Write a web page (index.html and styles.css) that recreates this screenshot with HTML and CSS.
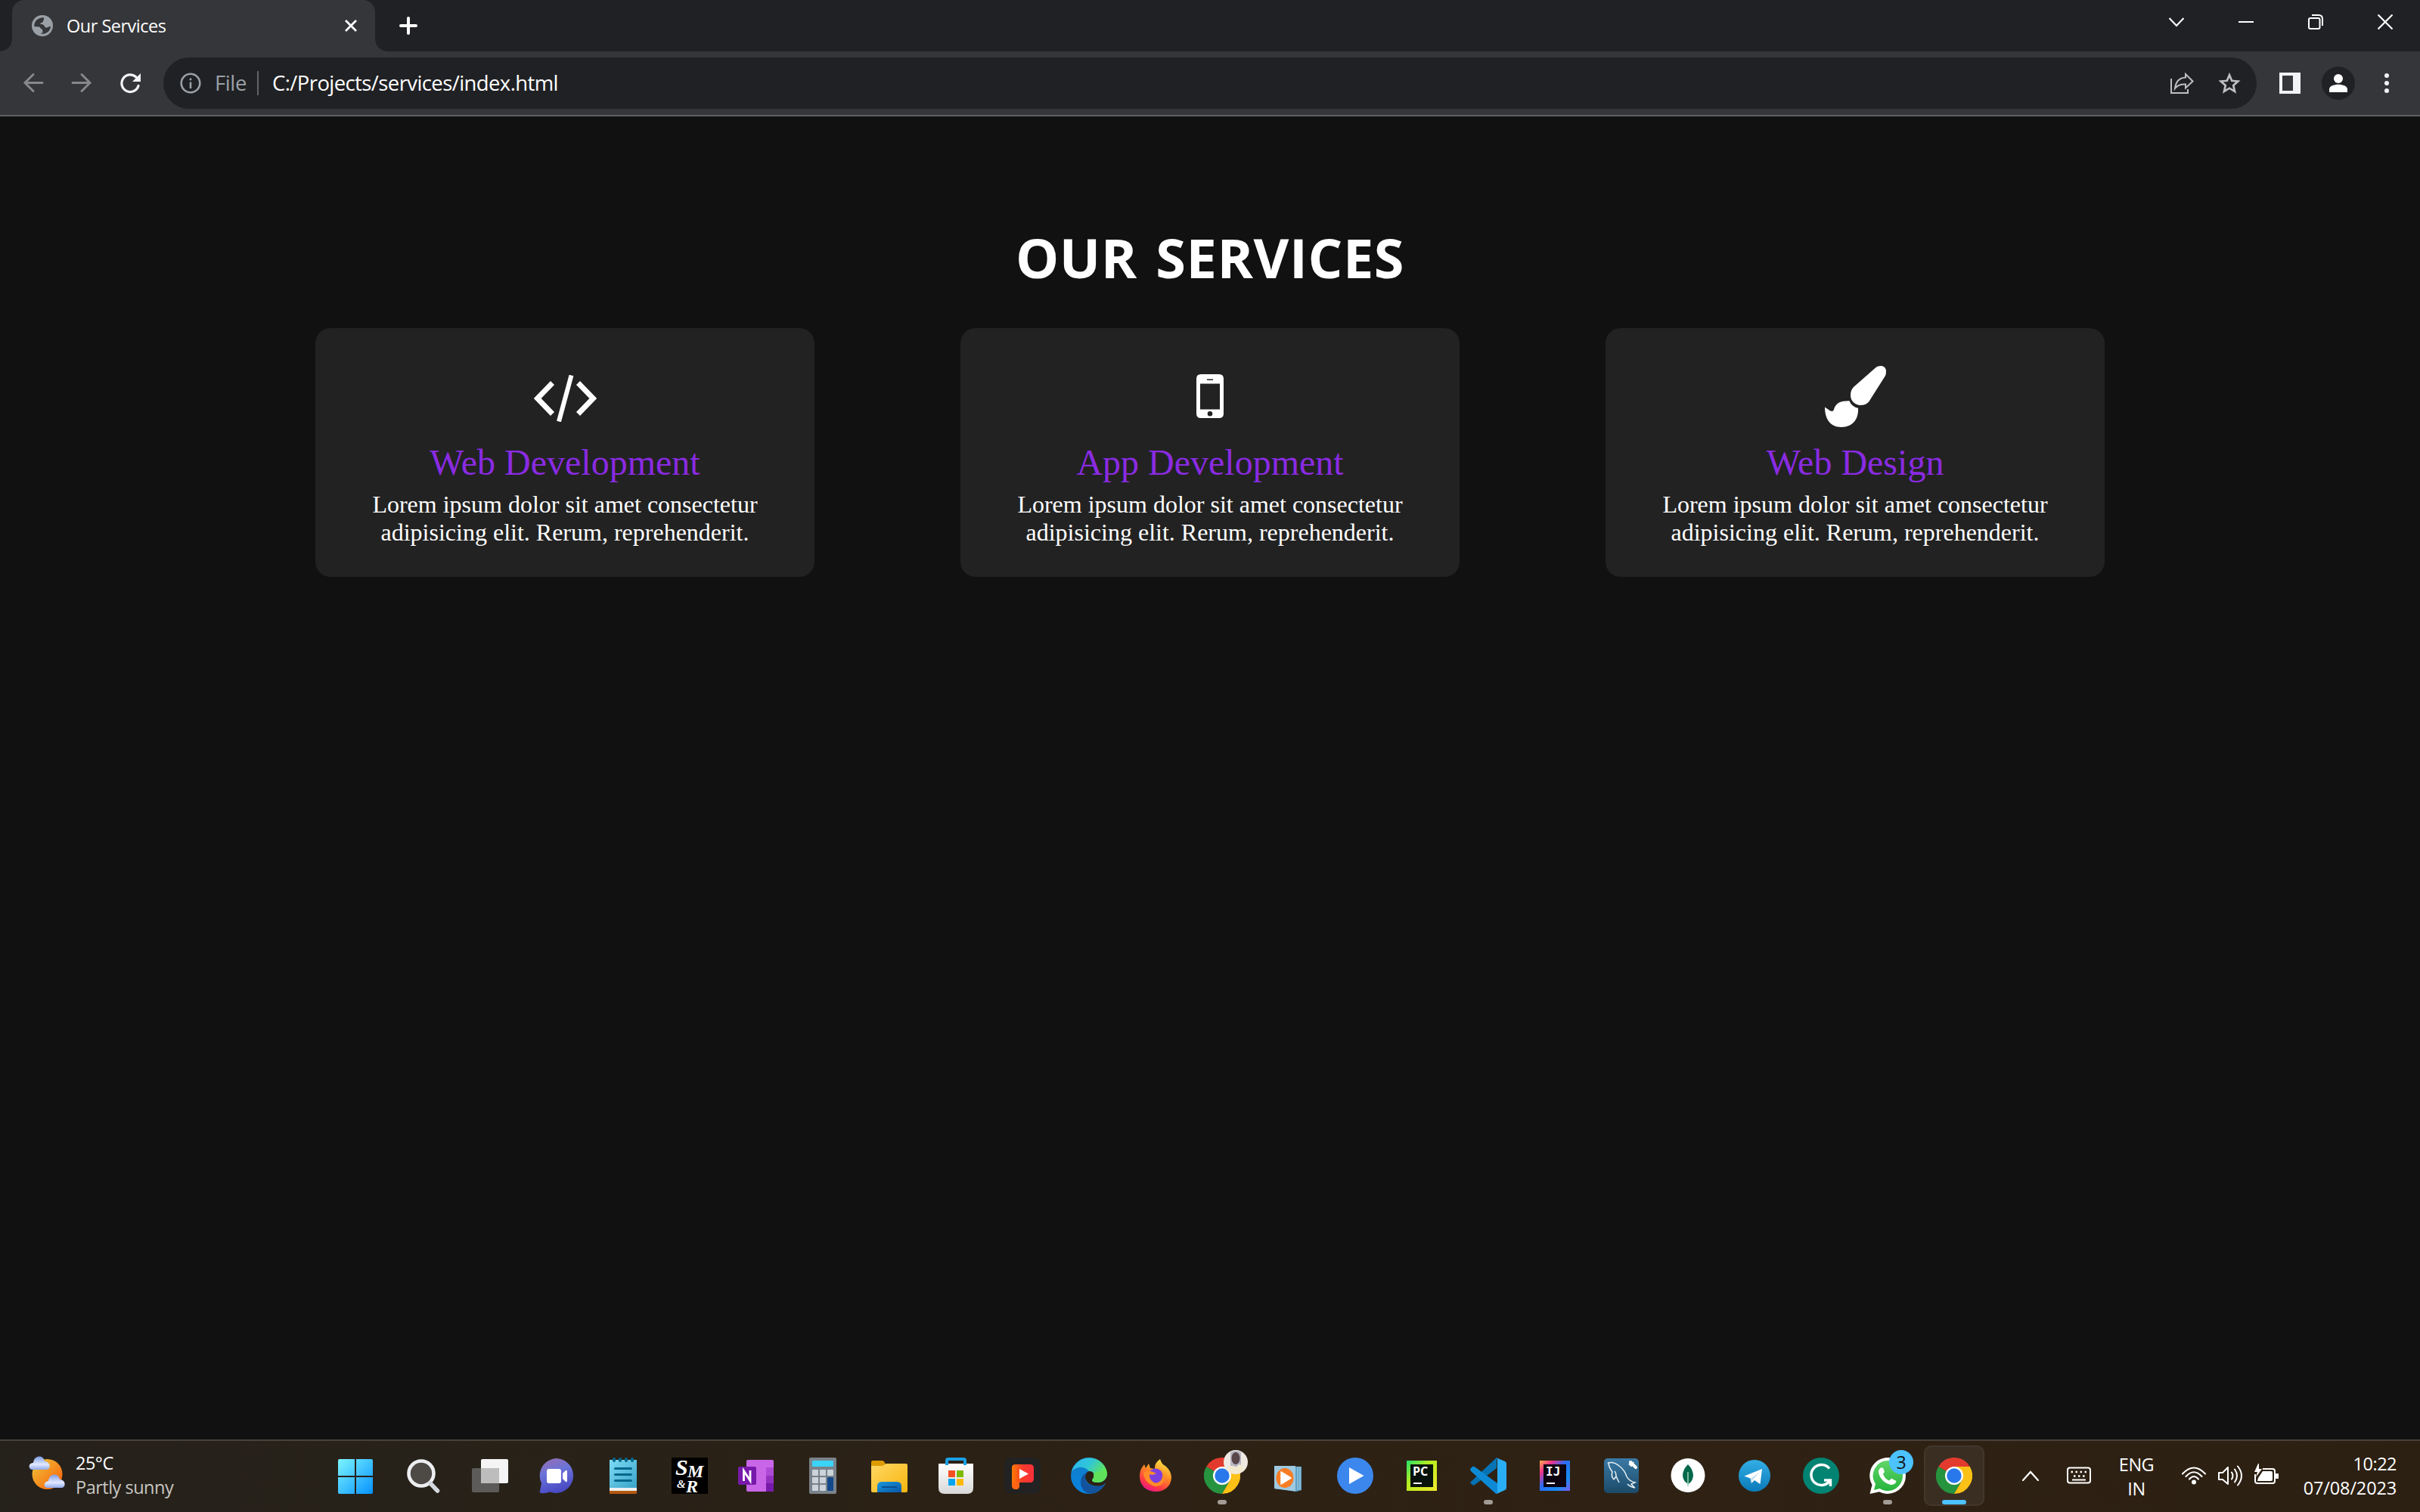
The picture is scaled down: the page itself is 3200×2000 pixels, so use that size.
FILE: index.html
```html
<!DOCTYPE html>
<html lang="en">
<head>
<meta charset="utf-8">
<title>Our Services</title>
<link rel="stylesheet" href="styles.css">
</head>
<body>
<header class="tabstrip">
  <div class="tab">
    <svg class="favicon" width="28" height="28" viewBox="0 0 28 28"><circle cx="14" cy="14" r="14" fill="#9aa0a6"/><path d="M16 3.200C8 3 3 8 3.200 15L9.500 15.500C12 16 11 18.500 14 18.500L14.500 23C13.500 23.500 12 24 11.500 24.600C19 26 25 21 25 14.500C23 16 21 15 20 16C18 17 17.500 14.500 15.500 13C14 11.500 12 12.500 11 11.500C12 10 14.500 10.500 15 8.500C15 6.500 17 6 16 3.200Z" fill="#35363a"/><path d="M16 3.200C17 7 15 7 15 9L11 11.500C14 12 15 11 16.500 14C18 17 19 17 21 16L25.500 13C25 7 21 3 16 3.200Z" fill="#9aa0a6"/></svg>
    <span class="tab-title">Our Services</span>
    <svg class="tab-close" width="16" height="16" viewBox="0 0 16 16" stroke="#fff" stroke-width="2.800"><path d="M1 1L15 15M15 1L1 15"/></svg>
  </div>
  <svg class="new-tab" width="24" height="24" viewBox="0 0 24 24" stroke="#fff" stroke-width="4" stroke-linecap="round"><path d="M12 2V22M2 12H22"/></svg>
  <div class="window-controls">
    <svg width="20" height="20" viewBox="0 0 20 20" fill="none" stroke="#fff" stroke-width="2.200"><path d="M.5 5L10 15L19.500 5"/></svg>
    <svg width="20" height="20" viewBox="0 0 20 20" stroke="#fff" stroke-width="2"><path d="M0 10H20"/></svg>
    <svg width="20" height="20" viewBox="0 0 20 20" fill="none" stroke="#fff" stroke-width="2"><rect x="1" y="5" width="14.500" height="14" rx="2"/><path d="M5 1H14Q19 1 19 6V15"/></svg>
    <svg width="20" height="20" viewBox="0 0 20 20" stroke="#fff" stroke-width="2.200"><path d="M.5 .5L19.500 19.500M19.500 .5L.5 19.500"/></svg>
  </div>
</header>

<nav class="toolbar">
  <div class="nav-buttons">
    <svg width="28" height="28" viewBox="0 0 28 28" fill="none" stroke="#86888a" stroke-width="3" stroke-linecap="round"><path d="M26 13.500H3M14 2.500L3 13.500L14 24.500"/></svg>
    <svg width="28" height="28" viewBox="0 0 28 28" fill="none" stroke="#86888a" stroke-width="3" stroke-linecap="round"><path d="M2 13.500H25M14 2.500L25 13.500L14 24.500"/></svg>
    <svg width="28" height="28" viewBox="0 0 28 28"><path d="M25 17.500A11.300 11.300 0 1 1 22 6" fill="none" stroke="#f1f3f4" stroke-width="3.200" stroke-linecap="round"/><path d="M28 1V12H17Z" fill="#f1f3f4"/></svg>
  </div>
  <div class="omnibox">
    <svg width="28" height="28" viewBox="0 0 28 28"><circle cx="14" cy="14" r="12.300" fill="none" stroke="#9aa0a6" stroke-width="2.600"/><path d="M12.700 12.500H15.300V21H12.700ZM12.700 7.500H15.300V10.200H12.700Z" fill="#9aa0a6"/></svg>
    <span class="scheme">File</span>
    <span class="divider"></span>
    <span class="url">C:/Projects/services/index.html</span>
    <div class="page-actions">
      <svg width="32" height="28" viewBox="0 0 32 28" fill="none" stroke="#bdbfc1" stroke-width="2"><path d="M2 8V27H24V22"/><path d="M7 21C8 12 13 7 21 6.500V2L30.500 11.500L21 20.500V15.500C14 15 10 17 7 21Z"/></svg>
      <svg width="30" height="28" viewBox="0 0 30 28" fill="none" stroke="#bdbfc1" stroke-width="2.700"><path d="M15 3.200L18.200 10.800L26.300 11.500L20.200 16.900L22 24.900L15 20.700L8 24.900L9.800 16.900L3.700 11.500L11.800 10.800Z"/></svg>
    </div>
  </div>
  <svg class="panel" width="28" height="28" viewBox="0 0 28 28"><path d="M0 0H28V28H0ZM4 4V24H18V4Z" fill="#f1f3f4" fill-rule="evenodd"/></svg>
  <div class="profile"><svg width="24" height="24" viewBox="0 0 24 24" fill="#fff"><circle cx="12" cy="6" r="6"/><path d="M0 24V20C0 11.500 24 11.500 24 20V24Z"/></svg></div>
  <svg class="kebab" width="6" height="28" viewBox="0 0 6 28" fill="#f1f3f4"><circle cx="3" cy="4" r="3"/><circle cx="3" cy="14" r="3"/><circle cx="3" cy="24" r="3"/></svg>
</nav>

<main class="page">
  <h1 class="title">OUR SERVICES</h1>
  <section class="cards">
    <article class="card">
      <div class="card-icon"><svg class="code" width="83" height="62" viewBox="0 0 83 62" fill="none" stroke="#fff" stroke-width="7"><path d="M24.500 10.500L4.700 31L24.500 51.500M58.500 10.500L78.300 31L58.500 51.500"/><path d="M49.500 .5L33 61.500" stroke-width="6"/></svg></div>
      <h2 class="card-title">Web Development</h2>
      <p class="card-text">Lorem ipsum dolor sit amet consectetur adipisicing elit. Rerum, reprehenderit.</p>
    </article>
    <article class="card">
      <div class="card-icon"><svg class="phone" width="36" height="58" viewBox="0 0 36 58"><path d="M6 0H30Q36 0 36 6V52Q36 58 30 58H6Q0 58 0 52V6Q0 0 6 0ZM5 12.500V46.500H31V12.500ZM14 6.500V8H22V6.500ZM18 49A3.300 3.300 0 0 0 18 55.600A3.300 3.300 0 0 0 18 49Z" fill="#fff" fill-rule="evenodd"/></svg></div>
      <h2 class="card-title">App Development</h2>
      <p class="card-text">Lorem ipsum dolor sit amet consectetur adipisicing elit. Rerum, reprehenderit.</p>
    </article>
    <article class="card">
      <div class="card-icon"><svg class="brush" width="81" height="81" viewBox="0 0 81 81" fill="#fff"><path d="M67 2.500L38 28Q34 32 34 39C34 47 41 52 47 52C54 52 58 49 61 43L80 13Q81 11 81 7C81 0 73-2 67 2.500Z"/><path d="M0 54.500C4 57 7 60 9.500 60Q11.500 60 12.500 56C15 49 21 46 32.500 46.200C34 50.500 38 54.500 44 55.800C45 70 37 81 22 81C7 81 0 70 0 54.500Z"/></svg></div>
      <h2 class="card-title">Web Design</h2>
      <p class="card-text">Lorem ipsum dolor sit amet consectetur adipisicing elit. Rerum, reprehenderit.</p>
    </article>
  </section>
</main>

<footer class="taskbar">
  <svg class="defs" width="0" height="0">
    <defs>
      <linearGradient id="sun" x1="0" y1="0" x2="1" y2="1"><stop offset="0" stop-color="#eec83a"/><stop offset="1" stop-color="#fb5a08"/></linearGradient>
      <linearGradient id="cloud" x1="0" y1="0" x2="0" y2="1"><stop offset="0" stop-color="#7d9ce6"/><stop offset=".6" stop-color="#e3eaff"/><stop offset="1" stop-color="#90aaec"/></linearGradient>
      <linearGradient id="win" x1="0" y1="0" x2="46" y2="46" gradientUnits="userSpaceOnUse"><stop offset="0" stop-color="#7df6ff"/><stop offset="1" stop-color="#0793ff"/></linearGradient>
      <linearGradient id="chat" x1="0" y1="0" x2=".3" y2="1"><stop offset="0" stop-color="#9a6cae"/><stop offset=".45" stop-color="#6c74d8"/><stop offset="1" stop-color="#4a4bc4"/></linearGradient>
      <linearGradient id="note" x1="0" y1="0" x2="1" y2="1"><stop offset="0" stop-color="#7fdcf5"/><stop offset="1" stop-color="#38a3c8"/></linearGradient>
      <linearGradient id="folder" x1="0" y1="0" x2="1" y2="1"><stop offset="0" stop-color="#ffd766"/><stop offset="1" stop-color="#f7b50c"/></linearGradient>
      <linearGradient id="blue" x1="0" y1="0" x2="1" y2="1"><stop offset="0" stop-color="#1a98dc"/><stop offset="1" stop-color="#0657a8"/></linearGradient>
      <linearGradient id="store" x1="0" y1="0" x2="0" y2="1"><stop offset="0" stop-color="#fff"/><stop offset="1" stop-color="#d8d8d8"/></linearGradient>
      <linearGradient id="play" x1="0" y1="0" x2="1" y2="0"><stop offset="0" stop-color="#ff7a00"/><stop offset=".5" stop-color="#fb3b2c"/><stop offset="1" stop-color="#f52f3a"/></linearGradient>
      <linearGradient id="edge" x1="0" y1="0" x2="1" y2=".5"><stop offset="0" stop-color="#2fb5f0"/><stop offset=".5" stop-color="#2fc6d8"/><stop offset="1" stop-color="#66e94c"/></linearGradient>
      <linearGradient id="edge2" x1="0" y1="0" x2="0" y2="1"><stop offset="0" stop-color="#0f7cc4"/><stop offset="1" stop-color="#0a84e2"/></linearGradient>
      <linearGradient id="fox" x1=".8" y1="0" x2=".3" y2="1"><stop offset="0" stop-color="#fff14a"/><stop offset=".45" stop-color="#ff8a26"/><stop offset=".8" stop-color="#ff3647"/><stop offset="1" stop-color="#e3158f"/></linearGradient>
      <linearGradient id="pc" x1="0" y1="0" x2="1" y2="1"><stop offset="0" stop-color="#21e06a"/><stop offset=".4" stop-color="#b5ee20"/><stop offset="1" stop-color="#f2e82c"/></linearGradient>
      <linearGradient id="ij" x1="0" y1="0" x2="1" y2="1"><stop offset="0" stop-color="#fdb24a"/><stop offset=".22" stop-color="#f0308c"/><stop offset=".45" stop-color="#2a6cf4"/><stop offset=".75" stop-color="#168cf0"/><stop offset="1" stop-color="#7b5cf0"/></linearGradient>
      <linearGradient id="sql" x1="0" y1="0" x2="0" y2="1"><stop offset="0" stop-color="#3a7aa6"/><stop offset="1" stop-color="#1c4a68"/></linearGradient>
      <linearGradient id="tg" x1="0" y1="0" x2="0" y2="1"><stop offset="0" stop-color="#33aee6"/><stop offset="1" stop-color="#0a7ab8"/></linearGradient>
      <linearGradient id="wa" x1="0" y1="0" x2="0" y2="1"><stop offset="0" stop-color="#60d66a"/><stop offset="1" stop-color="#28b43c"/></linearGradient>
      <symbol id="chrome" viewBox="0 0 48 48"><path d="M24 24L3.200 12A24 24 0 0 1 44.800 12Z" fill="#e23b2e"/><path d="M24 24L3.200 12A24 24 0 0 0 24 48L34.500 30Z" fill="#26943f"/><path d="M24 12H44.800A24 24 0 0 1 24 48L34.500 30Z" fill="#fbc116"/><circle cx="24" cy="24" r="12" fill="#fff"/><circle cx="24" cy="24" r="9.700" fill="#2878eb"/></symbol>
    </defs>
  </svg>

  <div class="weather">
    <svg width="50" height="46" viewBox="0 0 50 46"><circle cx="24.500" cy="25" r="20" fill="url(#sun)"/><path d="M5 19C-1 19-1 10 6 10C7-1 20-1 21 8C29 8 30 19 23 19Z" fill="url(#cloud)"/><path d="M25 43C19 43 19 35 26 34C27 23 40 23 41 32C49 32 50 43 43 43Z" fill="url(#cloud)"/></svg>
    <div class="weather-text"><span class="temp">25°C</span><span class="sky">Partly sunny</span></div>
  </div>

  <div class="apps">
    <div class="app"><svg viewBox="0 0 48 48"><path fill="url(#win)" d="M1 2H21V24H-1V4Q-1 2 1 2ZM23 2H43Q45 2 45 4V24H23ZM-1 26H21V48H1Q-1 48-1 46ZM23 26H45V46Q45 48 43 48H23Z"/></svg></div>
    <div class="app"><svg viewBox="0 0 48 48"><circle cx="21" cy="21" r="16.500" fill="#4d4a45" stroke="#eceef0" stroke-width="4.600"/><path d="M33 34L42.500 44" stroke="#d4d8de" stroke-width="5.500" stroke-linecap="round"/></svg></div>
    <div class="app"><svg viewBox="0 0 48 48"><rect x="12" y="2" width="36" height="32" rx="2" fill="#f4f4f4"/><rect x="0" y="14" width="36" height="32" rx="2" fill="#5c5b59"/><path d="M12 14H34Q36 14 36 16V34H12Z" fill="#bdbdbd"/></svg></div>
    <div class="app"><svg viewBox="0 0 48 48"><path d="M24 1A23 23 0 1 1 15 45.500Q9 48 3 47Q1 46.500 2 44L4 34A23 23 0 0 1 24 1Z" fill="url(#chat)"/><rect x="11" y="15" width="19" height="19" rx="3" fill="#fff"/><path d="M32 21L36 17Q38 16 38 19V30Q38 33 36 32L32 28Z" fill="#fff"/></svg></div>
    <div class="app"><svg viewBox="0 0 48 48"><rect x="6" y="42" width="36" height="6" rx="1" fill="#b4590f"/><rect x="6" y="38" width="36" height="6" fill="#eee"/><path d="M6 3H42V40H6Z" fill="url(#note)"/><path d="M12 2V4M20 2V4M28 2V4M36 2V4" stroke="#04678c" stroke-width="4" stroke-linecap="round"/><path d="M13.500 14.500H34.500M13.500 22.500H34.500M13.500 30.500H34.500" stroke="#04678c" stroke-width="3" stroke-linecap="round"/></svg></div>
    <div class="app"><svg viewBox="0 0 48 48" class="smr"><rect width="48" height="48"/><text><tspan x="5" y="23" font-size="30">S</tspan><tspan x="21" y="26" font-size="24">M</tspan><tspan x="7" y="40" font-size="15">&amp;</tspan><tspan x="19" y="46" font-size="24">R</tspan></text></svg></div>
    <div class="app"><svg viewBox="0 0 48 48"><rect x="11" y="3" width="36" height="42" rx="2" fill="#c966e8"/><path d="M37 13H47V24H37Z" fill="#ad4bd4"/><path d="M37 24H47V34H37Z" fill="#9332bf"/><path d="M37 34H47V43Q47 45 45 45H37Z" fill="#7719aa"/><rect x="0" y="12" width="24" height="24" rx="2" fill="#7719aa"/><path d="M7.500 31V17.500L16 30.500V17" fill="none" stroke="#fff" stroke-width="2.800"/></svg></div>
    <div class="app"><svg viewBox="0 0 48 48"><rect x="6" y="0" width="36" height="48" rx="2" fill="#7a838b"/><rect x="10" y="4" width="28" height="8" rx="1" fill="#3bd3f8"/><g fill="#ccd3da"><rect x="10" y="16" width="8" height="8" rx="1"/><rect x="20" y="16" width="8" height="8" rx="1"/><rect x="30" y="16" width="8" height="8" rx="1"/><rect x="10" y="26" width="8" height="8" rx="1"/><rect x="20" y="26" width="8" height="8" rx="1"/><rect x="10" y="36" width="8" height="8" rx="1"/><rect x="20" y="36" width="8" height="8" rx="1"/></g><rect x="30" y="26" width="8" height="18" rx="1" fill="#13488a"/></svg></div>
    <div class="app"><svg viewBox="0 0 48 48"><path d="M0 12V6Q0 4 2 4H14Q17 4 18 7L20 10V12Z" fill="#dc9b05"/><path d="M0 11H15L20 8H46Q48 8 48 10V44Q48 46 46 46H2Q0 46 0 44Z" fill="url(#folder)"/><path d="M8 46V38Q8 32 14 32H34Q40 32 40 38V46Z" fill="url(#blue)"/><path d="M15 39H33" stroke="#0a4d8c" stroke-width="2" stroke-linecap="round"/></svg></div>
    <div class="app"><svg viewBox="0 0 48 48"><path d="M1 8H47V40Q47 48 39 48H9Q1 48 1 40Z" fill="url(#store)"/><path d="M12 10V4Q12 2 14 2H34Q36 2 36 4V10" fill="none" stroke="#1aa0e6" stroke-width="4"/><path d="M14 17H23V26H14Z" fill="#f25022"/><path d="M25 17H34V26H25Z" fill="#7fba00"/><path d="M14 28H23V37H14Z" fill="#00a4ef"/><path d="M25 28H34V37H25Z" fill="#ffb900"/></svg></div>
    <div class="app"><svg viewBox="0 0 48 48"><rect width="48" height="48" rx="8" fill="#222"/><path d="M10 13Q10 9 15 9H34Q39 9 39 14V28Q39 33 34 33H20V37Q20 42 15 42Q10 42 10 37Z" fill="url(#play)"/><path d="M10 36Q11 33 15 33H20V37Q20 42 15 42Q10 41 10 36Z" fill="#ff6414"/><path d="M20 15L32 21.500L20 28Z" fill="#fff"/></svg></div>
    <div class="app"><svg viewBox="0 0 48 48"><circle cx="24" cy="24" r="24" fill="url(#edge2)"/><path d="M1 19A24 24 0 0 1 48 20C48 28 42 32 36 32C30 32 27 31 29 28C33 22 28 18 24 18C17 10 6 12 1 19Z" fill="url(#edge)"/><path d="M22 19Q12 24 13 34C14 44 22 49 29 47.500C36 46 41 42 44 37Q44 35 42 36C32 42 18 35 19 26Q19 21 22 19Z" fill="#13529c"/><path d="M24 18C32 18 32 25 28.500 28.500C27 31 30 33 36 33C42 33 46 29 48 24Q49 33 43 36C32 41 19 35 19 25Q20 19 24 18Z" fill="#2c2115"/><path d="M28.500 29Q26 33 36 33C42 33 48 29 48 21C46 18 32 18 30 22Q31 26 28.500 29Z" fill="#5fe25a"/></svg></div>
    <div class="app"><svg viewBox="0 0 48 48"><path d="M30 2Q32 9 37 11Q45 18 45 27C44 39 35 45 24 45C12 45 3 37 3 25Q3 16 7 12L9 9L11 14L15 8L17 14L23 15Q22 8 30 2Z" fill="url(#fox)"/><circle cx="24" cy="24" r="9.500" fill="#7c3fe0"/><path d="M8 20Q14 15 25 21Q20 24 16 22Q15 30 24 34Q34 32 33 22Q37 24 36 30Q32 39 23 38Q9 34 8 20Z" fill="#ff8c28"/></svg></div>
    <div class="app running"><svg><use href="#chrome"/></svg><svg class="badge" viewBox="0 0 32 32"><circle cx="16" cy="16" r="16" fill="#eee9e2"/><path d="M9 3Q16-1 23 3V22H9Z" fill="#b9b5c3"/><ellipse cx="16" cy="11" rx="5.500" ry="8" fill="#58464a"/><path d="M5 26Q8 20 13 21L16 24L20 19Q27 20 27 26Q20 33 12 31Z" fill="#f3e9cf"/></svg></div>
    <div class="app"><svg viewBox="0 0 48 48"><path d="M5 11L41 12V43L34 45L5 41Z" fill="#5d9fc4"/><path d="M5 11H33V44.500L5 41Z" fill="#9ec9e0"/><path d="M36 12V43M39 12V43" stroke="#b4d9ea"/><ellipse cx="19" cy="27" rx="11.500" ry="13" fill="#f77d25"/><path d="M14 19L27 27L14 35Z" fill="#fff" stroke="#fff" stroke-width="1.500" stroke-linejoin="round"/></svg></div>
    <div class="app"><svg viewBox="0 0 48 48"><circle cx="24" cy="24" r="24" fill="#3c87ed"/><path d="M16 13L35.500 24L16 35Z" fill="#fff"/></svg></div>
    <div class="app ide"><svg viewBox="0 0 48 48"><rect x="4" y="4" width="40" height="40" fill="url(#pc)"/><rect x="9" y="9" width="30" height="30" fill="#06120a"/><text x="12" y="24">PC</text><path d="M13 34H24" stroke="#fff" stroke-width="2"/></svg></div>
    <div class="app running"><svg viewBox="0 0 48 48"><path d="M0 34Q0 32 2 31L35 0V14L6 36Q4 37 3 36L0 33Z" fill="#0673b5"/><path d="M0 15L3 12Q5 11 7 13L36 34V48Q33 48 32 46L1 18Q0 16 0 15Z" fill="#0d8ad6"/><path d="M34 0L46 5Q48 6 48 8V40Q48 42 46 43L35 48Q36 47 36 45V3Q36 1 34 0Z" fill="#29aef5"/></svg></div>
    <div class="app ide"><svg viewBox="0 0 48 48"><rect x="4" y="4" width="40" height="40" fill="url(#ij)"/><rect x="9" y="9" width="30" height="30" fill="#0d0210"/><text class="mono" x="12" y="24">IJ</text><path d="M13 34H24" stroke="#fff" stroke-width="2"/></svg></div>
    <div class="app"><svg viewBox="0 0 48 48"><rect x="1" y="1" width="46" height="46" rx="5" fill="url(#sql)"/><path d="M14 29Q10 25 12 19Q8 14 6.500 7Q14 5 21 11Q28 16 31 25Q34 31 42 33L37 35Q39 38 42 40Q36 39 32 35M14 29L17 25L21 33M17 25Q17 20 15 18" fill="none" stroke="#e6f1f7" stroke-width="1.500"/><path d="M36 6L43 13" stroke="#fff" stroke-width="4" stroke-linecap="round"/><path d="M34 8L37 11L40 6" stroke="#fff" stroke-width="2" fill="none"/></svg></div>
    <div class="app"><svg viewBox="0 0 48 48"><circle cx="24" cy="23.500" r="22.500" fill="#fff"/><path d="M24 9Q31 16 31 24Q30 32 24.500 35Q18 32 17 24Q17 16 24 9Z" fill="#00684a"/><path d="M24 19V38" stroke="#9ccdb5" stroke-width="1.600"/></svg></div>
    <div class="app"><svg viewBox="0 0 48 48"><circle cx="24" cy="24" r="21" fill="url(#tg)"/><path d="M10.500 24.500L34 15L31.500 35L24 30L20 34L18.500 27.500Z" fill="#fff"/><path d="M19 27.500L31 19L22 29L20 33.500Z" fill="#c5dfee"/></svg></div>
    <div class="app"><svg viewBox="0 0 48 48"><circle cx="24" cy="24" r="24" fill="#038372"/><path d="M35 14.500A13.500 13.500 0 1 0 36 30M28 30H36.500V38" fill="none" stroke="#fff" stroke-width="3.400"/></svg></div>
    <div class="app running"><svg viewBox="0 0 48 48"><path d="M24 0A24 24 0 1 1 13 45.300L.5 48L3.500 36A24 24 0 0 1 24 0Z" fill="#fff"/><path d="M24 4A20 20 0 1 1 13.500 41L6 43L8 35A20 20 0 0 1 24 4Z" fill="url(#wa)"/><path d="M15 13.500Q12 15 12 19C13 28 22 36 30 36Q35 35 35.500 31L29 27.500L26 30.500Q20 28 18 21.500L20 19L18 13.500Z" fill="#fff"/></svg><span class="badge count">3</span></div>
    <div class="app running active"><svg><use href="#chrome"/></svg></div>
  </div>

  <div class="tray">
    <svg width="22" height="14" viewBox="0 0 22 14" fill="none" stroke="#fff" stroke-width="2.200" stroke-linecap="round"><path d="M1 13L11 2L21 13"/></svg>
    <svg width="32" height="24" viewBox="0 0 32 24" fill="none" stroke="#fff" stroke-width="2"><rect x="1" y="1.500" width="30" height="20" rx="3"/><path d="M5.500 7H8M11.500 7H14M17.500 7H20M23.500 7H26M9 12.500H11.500M15 12.500H17.500M21 12.500H23.500" stroke-width="2.500"/><path d="M7 17.500H25"/></svg>
    <div class="lang"><span>ENG</span><span>IN</span></div>
    <div class="status">
      <svg width="32" height="24" viewBox="0 0 32 24" fill="none" stroke="#fff" stroke-width="2.100" stroke-linecap="round"><path d="M1 9.500Q16-6.500 31 9.500M5.500 13Q16 1.500 26.500 13M10 16.500Q16 9.500 22 16.500"/><circle cx="16" cy="20.500" r="3" fill="#fff" stroke="none"/></svg>
      <svg width="32" height="28" viewBox="0 0 32 28" fill="none" stroke="#fff" stroke-width="2" stroke-linejoin="round" stroke-linecap="round"><path d="M1 10H6L13 3V25L6 19H1ZM18 9.500Q21 14 18 18.500M22 5.500Q28 14 22 22.500M26 1.500Q36 14 26 26.500"/></svg>
      <svg class="battery" width="32" height="28" viewBox="0 0 32 28"><path d="M11 7H24Q27 7 27 10V23Q27 26 24 26H4Q1 26 1 23V14" fill="none" stroke="#fff" stroke-width="2"/><path d="M11 10H22Q24 10 24 12V21Q24 23 22 23H4L5 19Z" fill="#fff"/><path d="M5 0L0 11H4L2 18L10 7H6V0Z" fill="#fff"/><rect x="28" y="13" width="4" height="7" rx="1" fill="#fff"/></svg>
    </div>
    <div class="clock"><span class="time">10:22</span><span class="date">07/08/2023</span></div>
  </div>
</footer>
</body>
</html>
```
FILE: styles.css
```css
* { box-sizing: border-box; margin: 0; padding: 0; }
body {
  width: 3200px; height: 2000px; overflow: hidden;
  display: flex; flex-direction: column;
  background: #111; color: #fff;
  font-family: "Open Sans", "Noto Sans", sans-serif;
}
svg { display: block; flex: none; }

/* Browser tab strip */
.tabstrip { height: 68px; padding-left: 16px; display: flex; align-items: center; background: #202124; }
.tab {
  position: relative; width: 480px; height: 68px; padding: 0 24px 0 26px;
  display: flex; align-items: center; background: #35363a; border-radius: 16px 16px 0 0;
}
.tab::before, .tab::after { content: ""; position: absolute; bottom: 0; width: 16px; height: 16px; }
.tab::before { left: -16px; background: radial-gradient(circle at 0 0, transparent 15.5px, #35363a 16px); }
.tab::after { right: -16px; background: radial-gradient(circle at 100% 0, transparent 15.5px, #35363a 16px); }
.tab-title { margin: 0 0 1px 18px; font-size: 23.5px; line-height: 32px; letter-spacing: -0.5px; white-space: nowrap; }
.tab-close { margin-left: auto; }
.new-tab { margin-left: 32px; }
.window-controls { margin: 0 36px 10px auto; display: flex; gap: 72px; }

/* Address toolbar */
.toolbar { height: 86px; padding-left: 30px; display: flex; align-items: center; background: #35363a; border-bottom: 2px solid #5f6165; }
.nav-buttons { display: flex; gap: 36px; }
.omnibox {
  width: 2768px; height: 68px; margin-left: 30px; padding: 0 21px 0 22px;
  display: flex; align-items: center; background: #202124; border-radius: 34px; font-size: 27.5px;
}
.scheme { width: 56px; margin: 0 0 2px 18px; color: #9aa0a6; letter-spacing: -0.4px; }
.divider { width: 2px; height: 32px; background: #5f6368; }
.url { margin: 0 0 2px 18px; letter-spacing: -0.6px; white-space: nowrap; }
.page-actions { margin-left: auto; display: flex; gap: 32px; }
.panel { margin-left: 30px; }
.profile { width: 44px; height: 44px; margin-left: 28px; display: grid; place-items: center; border-radius: 50%; background: #202124; }
.kebab { margin-left: 39px; }

/* Services page */
.page { flex: 1; padding-top: 136px; }
.title { height: 100px; line-height: 100px; font-size: 72px; font-weight: 700; text-align: center; letter-spacing: 0.6px; word-spacing: 5px; }
.cards { width: 2366px; margin: 44px auto 0; display: grid; grid-template-columns: repeat(3, 660px); justify-content: space-between; }
.card {
  height: 329px; padding: 50px 60px 0; border-radius: 20px; background: #222;
  font-family: "Liberation Serif", serif; text-align: center;
}
.card-icon { height: 82px; display: flex; align-items: center; justify-content: center; }
.code { margin-top: 4px; }
.phone { margin-bottom: 2px; }
.brush { margin-bottom: 1px; }
.card-title { margin-top: 18px; font-size: 48px; line-height: 56px; font-weight: 400; color: #8a2be2; }
.card-text { margin-top: 9px; font-size: 32px; line-height: 37px; }

/* Windows taskbar */
.taskbar {
  height: 96px; border-top: 2px solid #49423a; display: flex; padding: 6px 31px 8px 0;
  background: linear-gradient(90deg, #25211b, #272219 18%, #2c2115 40%, #2f2214 70%, #2c2013);
  font-size: 23.5px;
}
.defs { position: absolute; }
.weather { width: 432px; padding-left: 38px; display: flex; }
.weather svg { margin-top: 13px; }
.weather-text { margin: 7px 0 0 12px; display: flex; flex-direction: column; line-height: 32px; letter-spacing: -0.5px; }
.sky { color: #c9c7c4; }
.apps { display: flex; gap: 8px; }
.app { position: relative; width: 80px; height: 80px; display: grid; place-items: center; border-radius: 10px; }
.app > svg { width: 48px; height: 48px; overflow: visible; }
.running::after {
  content: ""; position: absolute; left: 34px; bottom: 2px; width: 12px; height: 6px;
  border-radius: 3px; background: #a39c95;
}
.active { background: #3a2e22; box-shadow: inset 0 0 0 2px #43372c; }
.active::after { left: 24px; width: 32px; background: #4cc2ff; }
.app > .badge { position: absolute; left: 42px; top: 6px; width: 32px; height: 32px; border-radius: 50%; }
.count { background: #4cc2ff; color: #111; font-size: 23px; line-height: 32px; text-align: center; }
.smr text { fill: #fff; font-family: "Liberation Serif", serif; font-weight: 700; font-style: italic; }
.ide text { fill: #fff; font: 700 16px "Open Sans", sans-serif; }
.ide .mono { font-family: "DejaVu Sans Mono", monospace; }
.tray { flex: 1; padding-left: 50px; display: flex; align-items: center; }
.tray > svg + svg { margin-left: 37px; }
.lang { width: 50px; margin: 2px 35px 0; display: flex; flex-direction: column; text-align: center; line-height: 32px; letter-spacing: -0.5px; }
.status { display: flex; align-items: center; gap: 16px; }
.battery { margin-bottom: 4px; }
.clock { margin-left: auto; display: flex; flex-direction: column; text-align: right; line-height: 32px; letter-spacing: -0.5px; }
.date { letter-spacing: -0.15px; }
```
